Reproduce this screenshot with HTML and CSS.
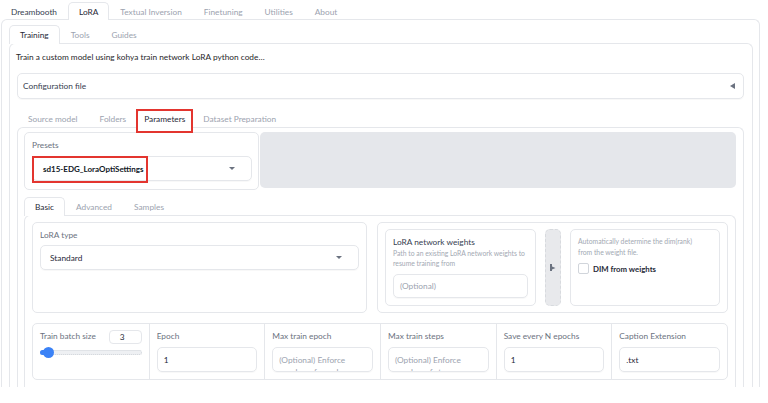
FILE: index.html
```html
<!DOCTYPE html>
<html lang="en">
<head>
<meta charset="utf-8">
<title>Kohya LoRA</title>
<link rel="stylesheet" href="styles.css">
</head>
<body>
<div class="page">
  <div class="tabs tabs-top">
    <div class="tab tab-dark">Dreambooth</div>
    <div class="tab active">LoRA</div>
    <div class="tab">Textual Inversion</div>
    <div class="tab">Finetuning</div>
    <div class="tab">Utilities</div>
    <div class="tab">About</div>
  </div>
  <div class="panel p1">
    <div class="tabs">
      <div class="tab active">Training</div>
      <div class="tab">Tools</div>
      <div class="tab">Guides</div>
    </div>
    <div class="panel p2">
      <p class="desc">Train a custom model using kohya train network LoRA python code…</p>
      <div class="accordion">
        <span>Configuration file</span>
        <span class="tri-left"></span>
      </div>
      <div class="tabs tabs-params">
        <div class="tab">Source model</div>
        <div class="tab">Folders</div>
        <div class="tab active marked">Parameters<span class="red-mark mark-tab"></span></div>
        <div class="tab">Dataset Preparation</div>
      </div>
      <div class="panel p3">
        <div class="presets-row">
          <div class="block presets">
            <div class="label">Presets</div>
            <div class="dropdown dd-presets">
              <span class="dd-value strong">sd15-EDG_LoraOptiSettings</span>
              <span class="tri-down"></span>
              <span class="red-mark mark-dd"></span>
            </div>
          </div>
          <div class="grey-fill"></div>
        </div>
        <div class="tabs tabs-basic">
          <div class="tab active">Basic</div>
          <div class="tab">Advanced</div>
          <div class="tab">Samples</div>
        </div>
        <div class="panel p4">
          <div class="row1">
            <div class="block loratype">
              <div class="label">LoRA type</div>
              <div class="dropdown dd-type">
                <span class="dd-value">Standard</span>
                <span class="tri-down"></span>
              </div>
            </div>
            <div class="group">
              <div class="block weights">
                <div class="label label-dark">LoRA network weights</div>
                <div class="info">Path to an existing LoRA network weights to resume training from</div>
                <div class="input placeholder">(Optional)</div>
              </div>
              <div class="file-btn">
                <svg width="6" height="7" viewBox="0 0 6 7"><path d="M0 0h2v7H0z M2 2.5l3.5 1.5L2 5.5z" fill="#6b7280"/></svg>
              </div>
              <div class="block dim">
                <div class="info">Automatically determine the dim(rank) from the weight file.</div>
                <label class="check">
                  <span class="checkbox"></span>
                  <span class="check-text">DIM from weights</span>
                </label>
              </div>
            </div>
          </div>
          <div class="row2">
            <div class="cell">
              <div class="cell-head">
                <span class="label">Train batch size</span>
                <span class="num">3</span>
              </div>
              <div class="slider">
                <div class="track"><div class="fill"></div><div class="thumb"></div></div>
              </div>
            </div>
            <div class="cell">
              <div class="label">Epoch</div>
              <div class="input field">1</div>
            </div>
            <div class="cell">
              <div class="label">Max train epoch</div>
              <div class="input field area placeholder">(Optional) Enforce number of epoch</div>
            </div>
            <div class="cell">
              <div class="label">Max train steps</div>
              <div class="input field area placeholder">(Optional) Enforce number of steps</div>
            </div>
            <div class="cell">
              <div class="label">Save every N epochs</div>
              <div class="input field">1</div>
            </div>
            <div class="cell">
              <div class="label">Caption Extension</div>
              <div class="input field">.txt</div>
            </div>
          </div>
        </div>
      </div>
    </div>
  </div>
</div>
</body>
</html>
```
FILE: styles.css
```css
* { box-sizing: border-box; }

body {
  margin: 0;
  background: #ffffff;
  font-family: Lato, "Liberation Sans", sans-serif;
  font-size: 8.3px;
  color: #1f2937;
}

.page {
  width: 760px;
  height: 387px;
  overflow: hidden;
  display: flex;
  flex-direction: column;
}

/* tabs */
.tabs {
  display: flex;
  align-items: flex-end;
  position: relative;
  z-index: 1;
}
.tab {
  height: 19px;
  padding: 0 10px;
  display: flex;
  align-items: center;
  color: #9ca3af;
  border: 1px solid transparent;
  border-bottom: none;
  border-radius: 5px 5px 0 0;
  margin-bottom: -1px;
  white-space: nowrap;
}
.tab.active {
  background: #ffffff;
  border-color: #e5e7eb;
  color: #1f2937;
}
.tab-dark { color: #374151; }
.tabs-top { padding-top: 2px; }
.tabs-top .tab { height: 18px; }
.tabs-params { margin-top: 10px; }
.tabs-basic { margin-top: 7px; }
.marked { position: relative; padding: 0 6px; }

.red-mark {
  position: absolute;
  border: 2px solid #e3352f;
  pointer-events: none;
}
.mark-tab { left: -2px; right: -2px; top: -1px; bottom: -5px; }
.mark-dd { left: -1px; top: -1px; width: 116px; height: 27px; }

/* panels */
.panel {
  border: 1px solid #e5e7eb;
  border-bottom: none;
  border-radius: 6px 6px 0 0;
  display: flex;
  flex-direction: column;
  flex: 1;
  background: #ffffff;
}
.p1 { width: 759px; margin-left: 1px; padding: 5px 6px 0 7px; }
.p2 { padding: 0 8px 0 7px; }
.p3 { padding: 4px 7px 0 6px; }
.p4 { padding: 6px 7px 0 7px; }

.desc {
  margin: 7px 0 0 -1px;
  line-height: 12px;
  color: #27272a;
}

.accordion {
  margin-top: 10px;
  height: 26px;
  border: 1px solid #e5e7eb;
  border-radius: 5px;
  display: flex;
  align-items: center;
  justify-content: space-between;
  padding: 0 8px 0 5px;
  color: #374151;
  box-shadow: 0 1px 1px rgba(0,0,0,0.03);
}
.tri-left {
  width: 0; height: 0;
  border-top: 3px solid transparent;
  border-bottom: 3px solid transparent;
  border-right: 5px solid #6b7280;
}
.tri-down {
  width: 0; height: 0;
  border-left: 3px solid transparent;
  border-right: 3px solid transparent;
  border-top: 3px solid #6b7280;
}

/* blocks */
.block {
  border: 1px solid #e5e7eb;
  border-radius: 5px;
  background: #ffffff;
  padding: 6px 7px;
}
.label {
  line-height: 12px;
  color: #6b7280;
  white-space: nowrap;
}
.label-dark { color: #374151; }

.presets-row { display: flex; gap: 1px; }
.presets { width: 235px; height: 58px; padding: 6px 6px 7px 7px; }
.grey-fill {
  flex: 1;
  height: 56px;
  background: #e5e7eb;
  border-radius: 5px;
}

.dropdown {
  position: relative;
  height: 25px;
  border: 1px solid #e5e7eb;
  border-radius: 5px;
  display: flex;
  align-items: center;
  justify-content: space-between;
  padding: 0 16px 0 10px;
  margin-top: 5px;
  box-shadow: 0 1px 1px rgba(0,0,0,0.03);
}
.dd-type { margin-top: 4px; padding-left: 9px; }
.dd-value { color: #1f2937; }
.strong { font-weight: 700; font-size: 8px; color: #111827; }

.row1 { display: flex; gap: 10px; height: 91px; }
.loratype { flex: 1; }
.group {
  width: 351px;
  border: 1px solid #e5e7eb;
  border-radius: 5px;
  padding: 6px 7px;
  display: flex;
  gap: 9px;
}
.weights { width: 151px; }
.dim { width: 150px; }
.info {
  font-size: 6.8px;
  line-height: 10px;
  color: #a3a9b3;
}
.dim .info { line-height: 11px; max-width: 124px; }
.input {
  height: 24px;
  margin-top: 6px;
  border: 1px solid #e5e7eb;
  border-radius: 5px;
  padding: 0 6px;
  display: flex;
  align-items: center;
  color: #1f2937;
  box-shadow: 0 1px 1px rgba(0,0,0,0.03);
}
.placeholder { color: #9ca3af; }

.file-btn {
  width: 16px;
  background: #e8e9ec;
  border: 1px dashed #d7dade;
  border-radius: 5px;
  display: flex;
  align-items: center;
  justify-content: center;
}

.check {
  display: flex;
  align-items: center;
  margin-top: 5px;
}
.checkbox {
  width: 11px;
  height: 11px;
  border: 1px solid #d1d5db;
  border-radius: 2px;
  background: #ffffff;
}
.check-text {
  margin-left: 4px;
  color: #1f2937;
  font-weight: 700;
  font-size: 7.8px;
}

/* row 2 */
.row2 {
  margin-top: 10px;
  border: 1px solid #e5e7eb;
  border-radius: 5px;
  display: grid;
  grid-template-columns: repeat(6, 1fr);
  height: 57px;
}
.cell {
  padding: 6px 7px 7px 7px;
  border-left: 1px solid #e5e7eb;
  min-width: 0;
}
.cell:first-child { border-left: none; padding-left: 7px; }
.cell-head {
  display: flex;
  justify-content: space-between;
  align-items: flex-start;
}
.num {
  width: 33px;
  height: 14px;
  border: 1px solid #e5e7eb;
  border-radius: 4px;
  padding-left: 10px;
  line-height: 12px;
  color: #1f2937;
}
.slider {
  height: 10px;
  margin-top: 3px;
  display: flex;
  align-items: center;
}
.track {
  position: relative;
  width: 100%;
  height: 5px;
  border-radius: 3px;
  background: #eef0f3;
  border: 1px dotted #d1d5db;
}
.fill {
  position: absolute;
  left: -1px;
  top: -1px;
  width: 8px;
  height: 5px;
  border-radius: 3px;
  background: #3b82f6;
}
.thumb {
  position: absolute;
  left: 2px;
  top: -4px;
  width: 11px;
  height: 11px;
  border-radius: 50%;
  background: #3b82f6;
}
.field { height: 25px; margin-top: 5px; }
.area {
  display: block;
  padding: 6px 6px 0 6px;
  line-height: 12px;
  overflow: hidden;
}
```
